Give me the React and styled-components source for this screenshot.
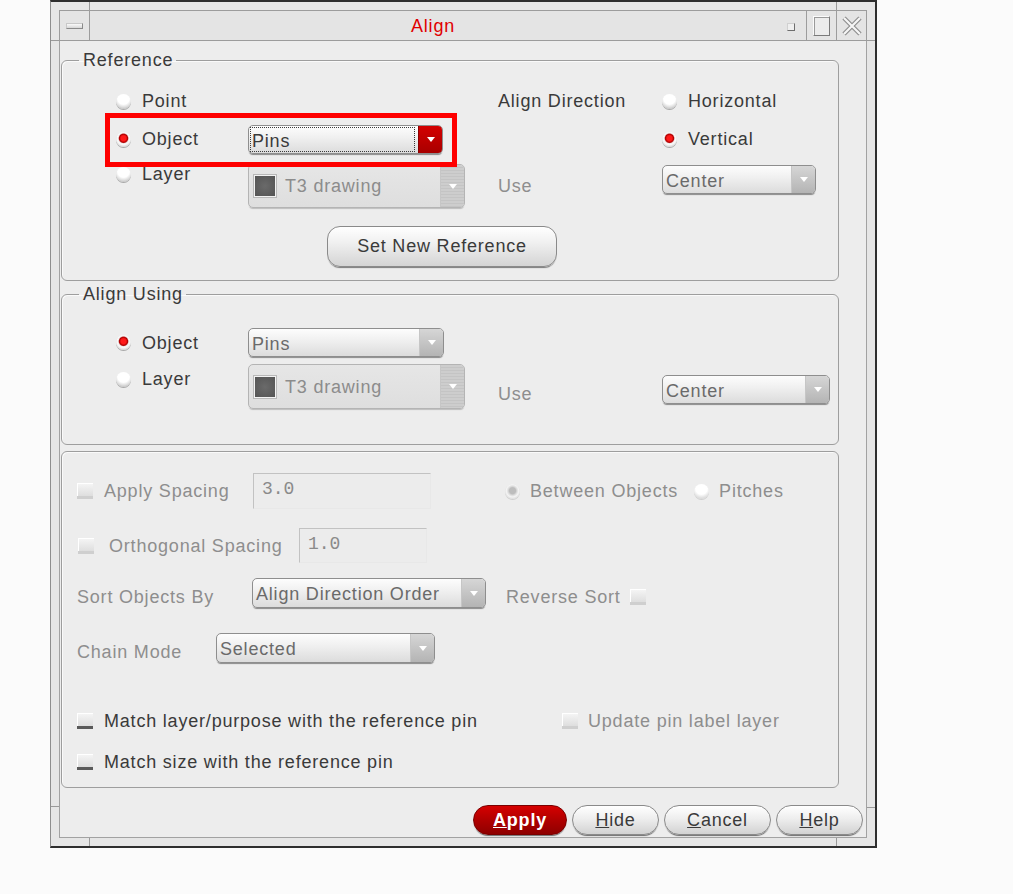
import React from "react";
import styled, { createGlobalStyle } from "styled-components";

const GlobalStyle = createGlobalStyle`
  html, body {
    margin: 0;
    padding: 0;
    background: #fbfbfb;
  }
  body {
    font-family: "Liberation Sans", Arial, sans-serif;
    font-size: 18px;
    letter-spacing: 0.8px;
    color: #3a3a3a;
  }
  * { box-sizing: border-box; }
`;

export default function App() {
  return (
    <>
      <GlobalStyle />
      <Page>
        <Window>
          <TitleBar>
            <MenuBox>
              <MenuBar />
            </MenuBox>
            <Title>Align</Title>
            <WinButton>
              <MinIcon />
            </WinButton>
            <WinButton $line>
              <MaxIcon />
            </WinButton>
            <WinButton $line>
              <svg width="22" height="22" viewBox="0 0 22 22">
                <path d="M3 3 L19 19 M19 3 L3 19" stroke="#8c8c8c" strokeWidth="4.5" />
                <path d="M3 3 L19 19 M19 3 L3 19" stroke="#f6f6f6" strokeWidth="2.2" />
              </svg>
            </WinButton>
          </TitleBar>

          <Content>
            {/* Reference */}
            <Group>
              <Legend>Reference</Legend>
              <OptGrid $rows="26px 40px 44px" $gap={5} $pt={18}>
                <Opt>Point</Opt>
                <span />
                <Label>Align Direction</Label>
                <Opt>Horizontal</Opt>

                <Opt checked>Object</Opt>
                <Select value="Pins" width={195} active focus />
                <span />
                <Opt checked>Vertical</Opt>

                <Cell $self="start">
                  <Opt>Layer</Opt>
                </Cell>
                <Select value="T3 drawing" width={217} height={44} disabled swatch />
                <Label $muted>Use</Label>
                <Cell $self="start" $mt={1}>
                  <Select value="Center" width={154} dim />
                </Cell>
              </OptGrid>
              <ButtonRow>
                <BigButton>Set New Reference</BigButton>
              </ButtonRow>
            </Group>

            {/* Align Using */}
            <Group $mt={3}>
              <Legend>Align Using</Legend>
              <OptGrid $rows="29px 45px" $gap={7} $pt={24} $pb={35}>
                <Opt checked>Object</Opt>
                <Select value="Pins" width={196} dim />
                <span />
                <span />

                <Cell $self="start" $mt={5}>
                  <Opt>Layer</Opt>
                </Cell>
                <Select value="T3 drawing" width={217} height={45} disabled swatch />
                <Cell $mt={15}>
                  <Label $muted>Use</Label>
                </Cell>
                <Cell $self="start" $mt={11}>
                  <Select value="Center" width={168} dim />
                </Cell>
              </OptGrid>
            </Group>

            {/* Spacing options */}
            <Group $mt={6} $pt={21} $pb={15}>
              <FieldRow $h={36}>
                <Cell $w={191} $pl={15}>
                  <CheckItem disabled>Apply Spacing</CheckItem>
                </Cell>
                <TextField $w={178} $h={36}>3.0</TextField>
                <Cell $w={74} />
                <Opt checked disabled small>Between Objects</Opt>
                <Cell $w={16} />
                <Opt disabled small>Pitches</Opt>
              </FieldRow>

              <FieldRow $h={35} $mt={19}>
                <Cell $w={237} $pl={16}>
                  <CheckItem disabled gap={15}>Orthogonal Spacing</CheckItem>
                </Cell>
                <TextField $w={128} $h={35}>1.0</TextField>
              </FieldRow>

              <FieldRow $h={30} $mt={15}>
                <Cell $w={190} $pl={15} $mt={8}>
                  <Label $muted>Sort Objects By</Label>
                </Cell>
                <Select value="Align Direction Order" width={234} height={30} dim />
                <Cell $w={144} $pl={20} $mt={8}>
                  <Label $muted>Reverse Sort</Label>
                </Cell>
                <Cell $mt={8}>
                  <CheckBox $disabled />
                </Cell>
              </FieldRow>

              <FieldRow $h={30} $mt={25}>
                <Cell $w={154} $pl={15} $mt={8}>
                  <Label $muted>Chain Mode</Label>
                </Cell>
                <Select value="Selected" width={219} height={30} dim />
              </FieldRow>

              <FieldRow $h={20} $mt={48}>
                <Cell $w={500} $pl={15}>
                  <CheckItem>Match layer/purpose with the reference pin</CheckItem>
                </Cell>
                <CheckItem disabled gap={10}>Update pin label layer</CheckItem>
              </FieldRow>

              <FieldRow $h={20} $mt={21}>
                <Cell $pl={15}>
                  <CheckItem>Match size with the reference pin</CheckItem>
                </Cell>
              </FieldRow>
            </Group>

            <Actions>
              <ActionButton $primary $w={94}>
                <u>A</u>pply
              </ActionButton>
              <ActionButton $w={87}>
                <u>H</u>ide
              </ActionButton>
              <ActionButton $w={107}>
                <u>C</u>ancel
              </ActionButton>
              <ActionButton $w={87}>
                <u>H</u>elp
              </ActionButton>
            </Actions>
          </Content>

          {/* resize handle marks on the window frame */}
          <Tick $x={38} $y={0} $w={1} $h={8} />
          <Tick $x={785} $y={0} $w={1} $h={8} />
          <Tick $x={0} $y={38} $w={8} $h={1} />
          <Tick $x={816} $y={38} $w={8} $h={1} />
          <Tick $x={0} $y={804} $w={8} $h={1} />
          <Tick $x={816} $y={805} $w={8} $h={1} />
          <Tick $x={38} $y={836} $w={1} $h={8} />
          <Tick $x={785} $y={836} $w={1} $h={8} />

          {/* red highlight annotation */}
          <Highlight />
        </Window>
      </Page>
    </>
  );
}

function Opt({ checked, disabled, small, children }) {
  return (
    <OptRow $small={small}>
      <RadioDot $checked={checked} $disabled={disabled} />
      <Label $muted={disabled}>{children}</Label>
    </OptRow>
  );
}

function CheckItem({ disabled, gap = 11, children }) {
  return (
    <OptRow style={{ gap }}>
      <CheckBox $disabled={disabled} />
      <Label $muted={disabled}>{children}</Label>
    </OptRow>
  );
}

function Select({ value, width, height = 29, active, focus, disabled, swatch, dim }) {
  return (
    <SelectBox $w={width} $h={height} $disabled={disabled}>
      <SelectText $focus={focus} $disabled={disabled} $dim={dim}>
        {swatch && <Swatch />}
        {value}
      </SelectText>
      <SelectArrow $active={active} $disabled={disabled}>
        <Tri />
      </SelectArrow>
    </SelectBox>
  );
}

const Page = styled.div`
  padding-left: 50px;
`;

const Window = styled.div`
  position: relative;
  width: 827px;
  height: 848px;
  background: #e6e6e6;
  border-top: 2px solid #2e2e2e;
  border-left: 1px solid #8e8e8e;
  border-right: 2px solid #2e2e2e;
  border-bottom: 2px solid #2e2e2e;
  padding: 8px;
  display: flex;
  flex-direction: column;
`;

const Tick = styled.div`
  position: absolute;
  left: ${({ $x }) => $x}px;
  top: ${({ $y }) => $y}px;
  width: ${({ $w }) => $w}px;
  height: ${({ $h }) => $h}px;
  background: #9a9a9a;
`;

const Highlight = styled.div`
  position: absolute;
  left: 54px;
  top: 111px;
  width: 352px;
  height: 54px;
  border: 5px solid #ff0000;
`;

const TitleBar = styled.div`
  height: 31px;
  display: flex;
  border: 1px solid #9c9c9c;
  background: #e4e4e4;
`;

const MenuBox = styled.div`
  width: 30px;
  border-right: 1px solid #9c9c9c;
  display: flex;
  align-items: center;
  justify-content: center;
  padding-top: 1px;
`;

const MenuBar = styled.div`
  width: 17px;
  height: 6px;
  background: linear-gradient(#fafafa, #d6d6d6);
  border: 1px solid #8a8a8a;
  border-top-color: #c8c8c8;
  border-left-color: #c8c8c8;
`;

const Title = styled.div`
  flex: 1;
  text-align: center;
  color: #e00000;
  line-height: 29px;
  padding-top: 1px;
`;

const WinButton = styled.div`
  width: 30px;
  display: flex;
  align-items: center;
  justify-content: center;
  border-left: ${({ $line }) => ($line ? "1px solid #9c9c9c" : "none")};
`;

const MinIcon = styled.div`
  width: 8px;
  height: 8px;
  margin-top: 3px;
  background: #efefef;
  border: 1px solid #6e6e6e;
  border-top-color: #d0d0d0;
  border-left-color: #d0d0d0;
`;

const MaxIcon = styled.div`
  width: 17px;
  height: 20px;
  background: #ececec;
  border: 1px solid #7a7a7a;
  border-top-color: #fbfbfb;
  border-left-color: #fbfbfb;
  box-shadow: inset 1px 1px 0 #9a9a9a;
`;

const Content = styled.div`
  flex: 1;
  background: #ededed;
  border: 1px solid #a2a2a2;
  border-top: none;
  padding: 9px 3px 0 1px;
  display: flex;
  flex-direction: column;
`;

const Group = styled.fieldset`
  margin: ${({ $mt }) => $mt || 0}px 24px 0 0;
  padding: ${({ $pt }) => $pt || 0}px 0 ${({ $pb }) => $pb || 0}px 0;
  min-width: 0;
  border: 1px solid #9e9e9e;
  border-radius: 6px;
  box-shadow: inset 1px 1px 0 #fafafa;
`;

const Legend = styled.legend`
  margin-left: 17px;
  padding: 0 3px 0 4px;
  line-height: 20px;
  color: #3a3a3a;
`;

const OptGrid = styled.div`
  display: grid;
  grid-template-columns: 132px 250px 164px 1fr;
  grid-template-rows: ${({ $rows }) => $rows};
  row-gap: ${({ $gap }) => $gap}px;
  padding: ${({ $pt }) => $pt}px 0 ${({ $pb }) => $pb || 0}px 54px;
  align-items: center;
`;

const Cell = styled.div`
  display: flex;
  align-items: center;
  align-self: ${({ $self }) => $self || "auto"};
  margin-top: ${({ $mt }) => $mt || 0}px;
  padding-left: ${({ $pl }) => $pl || 0}px;
  width: ${({ $w }) => ($w ? `${$w}px` : "auto")};
  flex-shrink: 0;
`;

const OptRow = styled.div`
  display: flex;
  align-items: center;
  gap: ${({ $small }) => ($small ? 10 : 11)}px;
  white-space: nowrap;
`;

const Label = styled.span`
  line-height: 20px;
  white-space: nowrap;
  color: ${({ $muted }) => ($muted ? "#8e8e8e" : "#3a3a3a")};
`;

const RadioDot = styled.span`
  width: 15px;
  height: 15px;
  border-radius: 50%;
  flex-shrink: 0;
  background: ${({ $checked, $disabled }) =>
    $checked
      ? $disabled
        ? "radial-gradient(circle at 50% 45%, #bdbdbd 0 28%, #dcdcdc 40%, #f4f4f4 55%, #d8d8d8 78%, #b4b4b4 100%)"
        : "radial-gradient(circle at 50% 42%, #ff1a1a 0 22%, #b00000 36%, #f0f0f0 46%, #fafafa 55%, #cfcfcf 78%, #8f8f8f 100%)"
      : $disabled
      ? "radial-gradient(circle at 50% 30%, #ffffff 0 45%, #e2e2e2 70%, #c4c4c4 100%)"
      : "radial-gradient(circle at 50% 30%, #ffffff 0 45%, #dcdcdc 68%, #9e9e9e 100%)"};
  box-shadow: ${({ $disabled }) => ($disabled ? "0 1px 0 #cfcfcf" : "0 1px 0 #a8a8a8")};
`;

const CheckBox = styled.span`
  display: inline-block;
  width: 16px;
  height: 16px;
  flex-shrink: 0;
  background: linear-gradient(#f6f6f6, #dedede);
  border-bottom: 3px solid ${({ $disabled }) => ($disabled ? "#cfcfcf" : "#5a5a5a")};
  box-shadow: inset 1px 1px 0 #ffffff;
`;

const SelectBox = styled.div`
  display: flex;
  width: ${({ $w }) => $w}px;
  height: ${({ $h }) => $h}px;
  border: 1px solid ${({ $disabled }) => ($disabled ? "#b4b4b4" : "#8e8e8e")};
  border-radius: 5px;
  overflow: hidden;
  background: ${({ $disabled }) =>
    $disabled ? "linear-gradient(#e6e6e6, #dedede)" : "linear-gradient(#fdfdfd, #efefef 45%, #dcdcdc)"};
  box-shadow: 0 2px 1px -1px ${({ $disabled }) => ($disabled ? "#bdbdbd" : "#8a8a8a")};
`;

const SelectText = styled.div`
  flex: 1;
  display: flex;
  align-items: ${({ $disabled }) => ($disabled ? "center" : "flex-start")};
  gap: 9px;
  margin: 1px 3px 1px 1px;
  padding: ${({ $disabled }) => ($disabled ? "0 0 0 3px" : "2px 0 0 1px")};
  line-height: 22px;
  white-space: nowrap;
  border: 1px ${({ $focus }) => ($focus ? "dotted #3a3a3a" : "solid transparent")};
  color: ${({ $disabled, $dim }) => ($disabled ? "#8c8c8c" : $dim ? "#6a6a6a" : "#3a3a3a")};
`;

const Swatch = styled.span`
  width: 22px;
  height: 22px;
  background: radial-gradient(circle at 50% 50%, #6a6a6a, #545454);
  border: 1px solid #f2f2f2;
  outline: 1px solid #b8b8b8;
  flex-shrink: 0;
`;

const SelectArrow = styled.div`
  width: 24px;
  display: flex;
  align-items: center;
  justify-content: center;
  border-left: 1px solid ${({ $active }) => ($active ? "#8a0000" : "#c6c6c6")};
  background: ${({ $active, $disabled }) =>
    $active
      ? "linear-gradient(#d40000, #a80000)"
      : $disabled
      ? "repeating-linear-gradient(#cdcdcd 0 2px, #c4c4c4 2px 3px)"
      : "linear-gradient(#d6d6d6, #b4b4b4)"};
`;

const Tri = styled.span`
  width: 0;
  height: 0;
  border-left: 4px solid transparent;
  border-right: 4px solid transparent;
  border-top: 5px solid #ffffff;
`;

const ButtonRow = styled.div`
  display: flex;
  padding: 18px 0 13px 265px;
`;

const BigButton = styled.button`
  width: 230px;
  height: 41px;
  font: inherit;
  letter-spacing: inherit;
  color: #3a3a3a;
  border: 1px solid #8a8a8a;
  border-radius: 13px;
  background: linear-gradient(#ffffff, #f0f0f0 40%, #d4d4d4);
  box-shadow: 0 2px 1px -1px #7a7a7a;
  padding: 0;
`;

const FieldRow = styled.div`
  display: flex;
  align-items: center;
  height: ${({ $h }) => $h}px;
  margin-top: ${({ $mt }) => $mt || 0}px;
`;

const TextField = styled.div`
  width: ${({ $w }) => $w}px;
  height: ${({ $h }) => $h}px;
  flex-shrink: 0;
  border: 1px solid #c2c2c2;
  border-bottom-color: #e8e8e8;
  border-right-color: #e8e8e8;
  background: #ececec;
  padding: 5px 0 0 8px;
  font-family: "Liberation Mono", "DejaVu Sans Mono", monospace;
  letter-spacing: 0;
  font-size: 18px;
  color: #8a8a8a;
`;

const Actions = styled.div`
  display: flex;
  justify-content: flex-end;
  gap: 5px;
  margin-top: 17px;
`;

const ActionButton = styled.button`
  width: ${({ $w }) => $w}px;
  height: 30px;
  padding: 0;
  font: inherit;
  letter-spacing: inherit;
  font-weight: ${({ $primary }) => ($primary ? 700 : 400)};
  color: ${({ $primary }) => ($primary ? "#ffffff" : "#3a3a3a")};
  border: 1px solid ${({ $primary }) => ($primary ? "#7a0000" : "#8a8a8a")};
  border-radius: 15px;
  background: ${({ $primary }) =>
    $primary ? "linear-gradient(#d60000, #b00000 50%, #8e0000)" : "linear-gradient(#ffffff, #eeeeee 45%, #d2d2d2)"};
  box-shadow: 0 2px 1px -1px #6e6e6e;
`;
